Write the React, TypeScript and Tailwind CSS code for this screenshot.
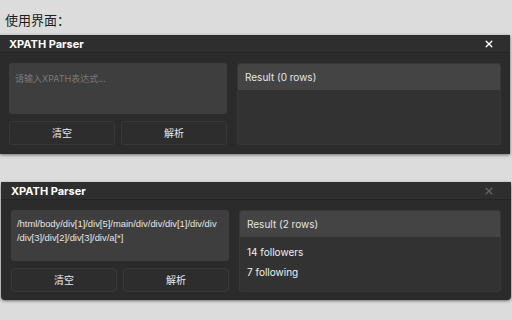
import React from 'react';

const font = { fontFamily: 'Inter, "Noto Sans CJK SC", sans-serif' };

type PanelProps = {
  lines?: string[];
  rows: string[];
  closeDim?: boolean;
  className: string;
  padX: string;
};

const CloseIcon: React.FC<{ dim?: boolean }> = ({ dim }) => (
  <svg width="8" height="8" viewBox="0 0 10 10" className={dim ? 'text-[#5f6468]' : 'text-white'}>
    <path d="M1.5 1.5 L8.5 8.5 M8.5 1.5 L1.5 8.5" stroke="currentColor" strokeWidth="1.7" strokeLinecap="round" />
  </svg>
);

const Panel: React.FC<PanelProps> = ({ lines, rows, closeDim, className, padX }) => (
  <div className={`bg-[#2b2b2b] shadow-[0_1px_3px_rgba(0,0,0,0.5)] ${className}`}>
    <div className={`flex h-[18px] items-center justify-between border-b border-[#242424] bg-[#2e2e2e] ${padX}`}>
      <span className="pt-px text-[11px] font-bold text-white">XPATH Parser</span>
      <span className="mr-[8px] flex"><CloseIcon dim={closeDim} /></span>
    </div>
    <div className={`flex gap-[10px] pt-[10px] pb-[8px] ${padX}`}>
      <div className="flex w-[218px] flex-col gap-[7px]">
        <div className="h-[51px] overflow-hidden rounded-[3px] bg-[#3e3e3e] py-[7px] pl-[6px] pr-[3px]">
          {lines ? (
            lines.map((l) => (
              <p key={l} className="whitespace-nowrap font-['Liberation_Sans'] text-[9.4px] leading-[14px] text-[#e6e6e6]">{l}</p>
            ))
          ) : (
            <p className="pt-[2px] text-[9px] text-[#7a7a7a]">请输入XPATH表达式...</p>
          )}
        </div>
        <div className="flex gap-[6px]">
          {['清空', '解析'].map((t) => (
            <button
              key={t}
              className="flex h-[24px] flex-1 items-center justify-center rounded-[3px] border border-[#383838] bg-[#2d2d2d] text-[10px] text-[#e8e8e8]"
            >
              {t}
            </button>
          ))}
        </div>
      </div>
      <div className="flex flex-1 flex-col overflow-hidden rounded-[3px] border border-[#383838] bg-[#323232]">
        <div className="flex h-[26px] items-center bg-[#444444] px-[7px] text-[10px] text-[#e6e6e6]">
          Result ({rows.length} rows)
        </div>
        <div className="flex flex-col gap-[6px] px-[7px] pt-[8px]">
          {rows.map((r) => (
            <span key={r} className="text-[10px] leading-[14px] text-[#f0f0f0]">{r}</span>
          ))}
        </div>
      </div>
    </div>
  </div>
);

export default function App() {
  return (
    <div className="h-[320px] w-[512px] overflow-hidden bg-[#dcdcdc]" style={font}>
      <div className="flex h-[35px] items-start pl-[5px] pt-[12px] text-[13px] leading-[17px] text-[#1e1e1e]">使用界面：</div>
      <Panel rows={[]} className="h-[119px] w-[510px]" padX="px-[9px]" />
      <Panel
        lines={['/html/body/div[1]/div[5]/main/div/div/div[1]/div/div', '/div[3]/div[2]/div[3]/div/a[*]']}
        rows={['14 followers', '7 following']}
        closeDim
        className="ml-px mt-[28px] h-[118px] w-[510px] rounded-[4px]"
        padX="px-[10px]"
      />
    </div>
  );
}
